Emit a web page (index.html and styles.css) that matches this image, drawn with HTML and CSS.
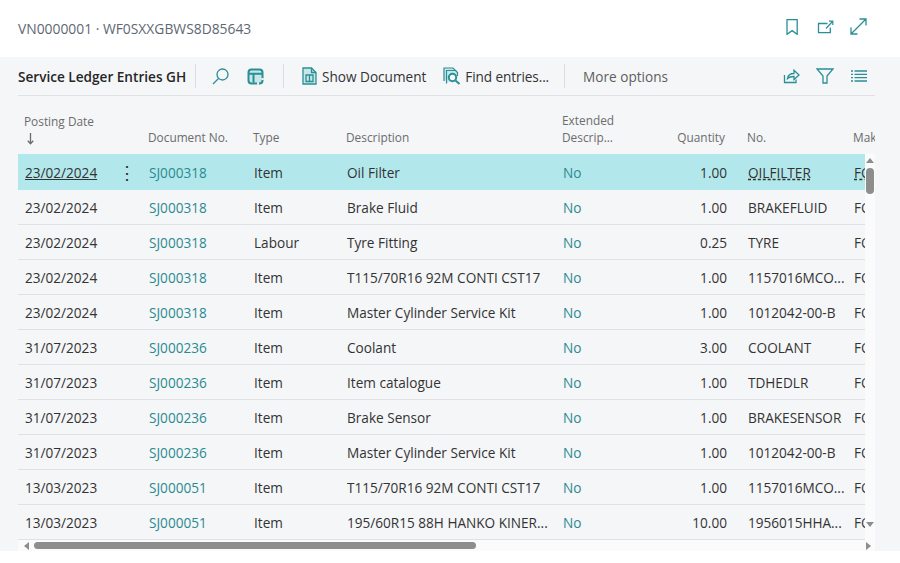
FILE: index.html
```html
<!DOCTYPE html>
<html lang="en">
<head>
    <meta charset="UTF-8">
    <meta name="viewport" content="width=device-width, initial-scale=1.0">
    <title>Service Ledger Entries GH</title>
    <link rel="stylesheet" href="styles.css">
</head>
<body>

<header class="top-bar">
    <div class="page-title">VN0000001 · WF0SXXGBWS8D85643</div>
    <div class="top-icons">
        <svg class="icon" width="16" height="16" viewBox="0 0 16 16"><path d="M3 .7h10.200v14.600L8.100 11.600 3 15.300z"/></svg>
        <svg class="icon" width="18" height="16" viewBox="0 0 18 16"><path d="M11.500 4.500H2.500v9.200H14.300V8.500"/><path d="M10 9.500l6-6.500M13 2.200h3.800V6" class="thin"/></svg>
        <svg class="icon" width="17" height="17" viewBox="0 0 17 17"><path d="M1 16 16 1M9.500 1H16v6.500M1 9.500V16h6.500"/></svg>
    </div>
</header>

<main class="panel">
    <div class="toolbar">
        <span class="part-title">Service Ledger Entries GH</span>
        <span class="divider"></span>
        <svg class="icon tool-search" width="17" height="17" viewBox="0 0 17 17"><circle cx="10.500" cy="6.500" r="5.500"/><path d="M6.500 10.500 1 16"/></svg>
        <svg class="icon tool-layout" width="17" height="17" viewBox="0 0 17 17"><rect x="1.500" y="1.500" width="14" height="14" rx="3" class="heavy soft"/><path d="M2 5.800h13M6.500 5.800v9" class="heavy"/><path d="M10 15.500h2M15.500 10v2" class="gap"/></svg>
        <span class="divider divider-wide"></span>
        <button class="action">
            <svg class="icon" width="15" height="18" viewBox="0 0 15 18"><path d="M1 1h8.500L14 5.500V17H1z" class="soft"/><path d="M9.500 1v4.500H14M4 8h7v6.500H4zM7.500 8v6.500"/></svg>
            Show Document
        </button>
        <button class="action action-find">
            <svg class="icon" width="18" height="18" viewBox="0 0 18 18"><path d="M1 14V1h9l3 3v2" class="thin soft"/><path d="M3.500 16.500V3.500h9l2 2V9" class="thin soft"/><circle cx="9.500" cy="10.500" r="3.700" class="heavy lens"/><path d="M12.500 13.500 16.500 17" class="heavy"/></svg>
            Find entries...
        </button>
        <span class="divider divider-more"></span>
        <span class="more">More options</span>
        <div class="tool-right">
            <svg class="icon" width="17" height="16" viewBox="0 0 17 16"><path d="M1.500 7v7.500h11.500v-3"/><path d="M4.500 10.500c.5-3 3-5 6.500-5V2.300l5 4.700-5 4.500V8.500c-3 0-5 .5-6.500 2z"/></svg>
            <svg class="icon" width="18" height="16" viewBox="0 0 18 16"><path d="M1 1h16l-6 7v7H7V8z"/></svg>
            <svg class="icon" width="16" height="12" viewBox="0 0 16 12"><path d="M3.500 1H16M3.500 4.300H16M3.500 7.700H16M3.500 11H16M0 1h2M0 4.300h2M0 7.700h2M0 11h2"/></svg>
        </div>
    </div>

    <div class="list-area">
        <div class="table-wrap">
            <table class="entries">
                <colgroup>
                    <col class="c-date"><col class="c-doc"><col class="c-type"><col class="c-desc"><col class="c-ext"><col class="c-qty"><col class="c-no"><col class="c-make">
                </colgroup>
                <thead>
                    <tr>
                        <th>Posting Date<svg class="sort-arrow" width="7" height="12" viewBox="0 0 7 12"><path d="M3.500 0v10.500M.8 7.800l2.700 3 2.700-3"/></svg></th>
                        <th>Document No.</th>
                        <th>Type</th>
                        <th>Description</th>
                        <th>Extended<br>Descrip...</th>
                        <th class="num">Quantity</th>
                        <th>No.</th>
                        <th>Make</th>
                    </tr>
                </thead>
                <tbody>
                    <tr class="selected">
                        <td><div class="date-cell"><u>23/02/2024</u><span class="kebab">⋮</span></div></td>
                        <td class="link">SJ000318</td><td>Item</td><td>Oil Filter</td><td class="link">No</td><td class="num">1.00</td>
                        <td><span class="dashed">OILFILTER</span></td><td><span class="dashed">FORD</span></td>
                    </tr>
                    <tr><td>23/02/2024</td><td class="link">SJ000318</td><td>Item</td><td>Brake Fluid</td><td class="link">No</td><td class="num">1.00</td><td>BRAKEFLUID</td><td>FORD</td></tr>
                    <tr><td>23/02/2024</td><td class="link">SJ000318</td><td>Labour</td><td>Tyre Fitting</td><td class="link">No</td><td class="num">0.25</td><td>TYRE</td><td>FORD</td></tr>
                    <tr><td>23/02/2024</td><td class="link">SJ000318</td><td>Item</td><td>T115/70R16 92M CONTI CST17</td><td class="link">No</td><td class="num">1.00</td><td>1157016MCO...</td><td>FORD</td></tr>
                    <tr><td>23/02/2024</td><td class="link">SJ000318</td><td>Item</td><td>Master Cylinder Service Kit</td><td class="link">No</td><td class="num">1.00</td><td>1012042-00-B</td><td>FORD</td></tr>
                    <tr><td>31/07/2023</td><td class="link">SJ000236</td><td>Item</td><td>Coolant</td><td class="link">No</td><td class="num">3.00</td><td>COOLANT</td><td>FORD</td></tr>
                    <tr><td>31/07/2023</td><td class="link">SJ000236</td><td>Item</td><td>Item catalogue</td><td class="link">No</td><td class="num">1.00</td><td>TDHEDLR</td><td>FORD</td></tr>
                    <tr><td>31/07/2023</td><td class="link">SJ000236</td><td>Item</td><td>Brake Sensor</td><td class="link">No</td><td class="num">1.00</td><td>BRAKESENSOR</td><td>FORD</td></tr>
                    <tr><td>31/07/2023</td><td class="link">SJ000236</td><td>Item</td><td>Master Cylinder Service Kit</td><td class="link">No</td><td class="num">1.00</td><td>1012042-00-B</td><td>FORD</td></tr>
                    <tr><td>13/03/2023</td><td class="link">SJ000051</td><td>Item</td><td>T115/70R16 92M CONTI CST17</td><td class="link">No</td><td class="num">1.00</td><td>1157016MCO...</td><td>FORD</td></tr>
                    <tr><td>13/03/2023</td><td class="link">SJ000051</td><td>Item</td><td>195/60R15 88H HANKO KINER...</td><td class="link">No</td><td class="num">10.00</td><td>1956015HHA...</td><td>FORD</td></tr>
                </tbody>
            </table>
        </div>
        <div class="v-scroll">
            <span class="arrow-up"></span>
            <span class="v-thumb"></span>
            <span class="arrow-down"></span>
        </div>
    </div>
    <div class="h-scroll">
        <span class="arrow-left"></span>
        <span class="h-thumb"></span>
        <span class="arrow-right"></span>
    </div>
</main>

</body>
</html>
```

FILE: styles.css
```css
body { margin: 0; height: 563px; overflow: hidden; background-color: #ffffff; font-family: "Open Sans", "Noto Sans", sans-serif; font-size: 13.6px; color: #333333; }

.icon { display: block; flex: none; fill: none; stroke: #2b8f96; stroke-width: 1.3; }
.icon .thin { stroke-width: 1.2; }
.icon .heavy { stroke-width: 2; }
.icon .soft { fill: #c9e7e9; }
.icon .lens { fill: #f5f6f8; }
.icon .gap { stroke: #f5f6f8; stroke-width: 2.4; }

.top-bar { height: 57px; display: flex; align-items: center; justify-content: space-between; padding: 0 33px 1px 18px; box-sizing: border-box; }
.page-title { font-size: 13.85px; color: #5d6873; }
.top-icons { display: flex; align-items: center; gap: 16px; padding-bottom: 3px; }

.panel { background-color: #f5f6f8; height: 494px; padding: 0 25px 0 18px; }

.toolbar { height: 39px; box-sizing: border-box; display: flex; align-items: center; border-bottom: 1px solid #e0e1e4; }
.part-title { font-weight: 600; color: #262626; width: 170px; white-space: nowrap; }
.divider { width: 1px; height: 24px; background-color: #dcdde0; margin-left: 7px; }
.tool-search { margin-left: 16px; }
.tool-layout { margin-left: 18px; }
.divider-wide { margin-left: 19px; }
.action { display: flex; align-items: center; gap: 5px; padding: 0; border: none; background: none; font: inherit; color: #333333; margin-left: 18px; }
.action-find { gap: 4px; margin-left: 17px; letter-spacing: -0.1px; }
.divider-more { margin-left: 15px; }
.more { margin-left: 18px; color: #605e5c; }
.tool-right { margin-left: auto; display: flex; align-items: center; gap: 16px; padding-right: 8px; }
.tool-right .icon:nth-child(2) { margin-right: 1px; }

.list-area { position: relative; height: 444px; }
.table-wrap { width: 857px; height: 100%; overflow: hidden; }
.entries { width: 1000px; table-layout: fixed; border-collapse: collapse; }
.c-date { width: 124px; }
.c-doc { width: 105px; }
.c-type { width: 93px; }
.c-desc { width: 216px; }
.c-ext { width: 84px; }
.c-qty { width: 101px; }
.c-no { width: 106px; }
.c-make { width: 171px; }

.entries th { height: 58px; padding: 0 6px 8px; box-sizing: border-box; text-align: left; vertical-align: bottom; font-weight: 400; font-size: 11.85px; line-height: 17px; color: #6c6c6c; white-space: nowrap; }
.sort-arrow { display: block; margin: 3px 0 1px 3px; fill: none; stroke: #6c6c6c; stroke-width: 1.3; }
.entries td { height: 35px; padding: 2px 7px 0; box-sizing: border-box; border-bottom: 1px solid #dfe1e4; white-space: nowrap; overflow: hidden; }
.entries td.num, .entries th.num { text-align: right; }
.entries td.num { padding-right: 14px; }
.entries th.num { padding-right: 16px; }
.entries .link { color: #2a8a90; }
.selected td { background-color: #b2e8ec; border-bottom-color: #b2e8ec; }
.date-cell { display: flex; align-items: center; justify-content: space-between; }
.kebab { font-size: 18px; line-height: 1; font-weight: 400; margin-right: -1px; }
.dashed { text-decoration: underline dashed; }

/* scrollbars sit over the clipped end of the rows */
.v-scroll { position: absolute; top: 58px; right: 0; bottom: 0; width: 10px; background-color: #fbfbfc; display: flex; flex-direction: column; align-items: center; }
.v-thumb { width: 8px; height: 26px; margin-top: 5px; background-color: #8d8d8d; border-radius: 4px; }
.arrow-up { margin-top: 4px; border: 4px solid transparent; border-top: none; border-bottom: 5px solid #8d8d8d; }
.arrow-down { margin-top: auto; margin-bottom: 13px; border: 4px solid transparent; border-bottom: none; border-top: 5px solid #8d8d8d; }

.h-scroll { height: 11px; background-color: #fbfbfc; display: flex; align-items: center; }
.h-thumb { width: 442px; height: 7px; margin-left: 5px; background-color: #8d8d8d; border-radius: 4px; }
.arrow-left { margin-left: 6px; border: 4px solid transparent; border-left: none; border-right: 5px solid #8d8d8d; }
.arrow-right { margin-left: auto; margin-right: 4px; border: 4px solid transparent; border-right: none; border-left: 5px solid #8d8d8d; }
```
